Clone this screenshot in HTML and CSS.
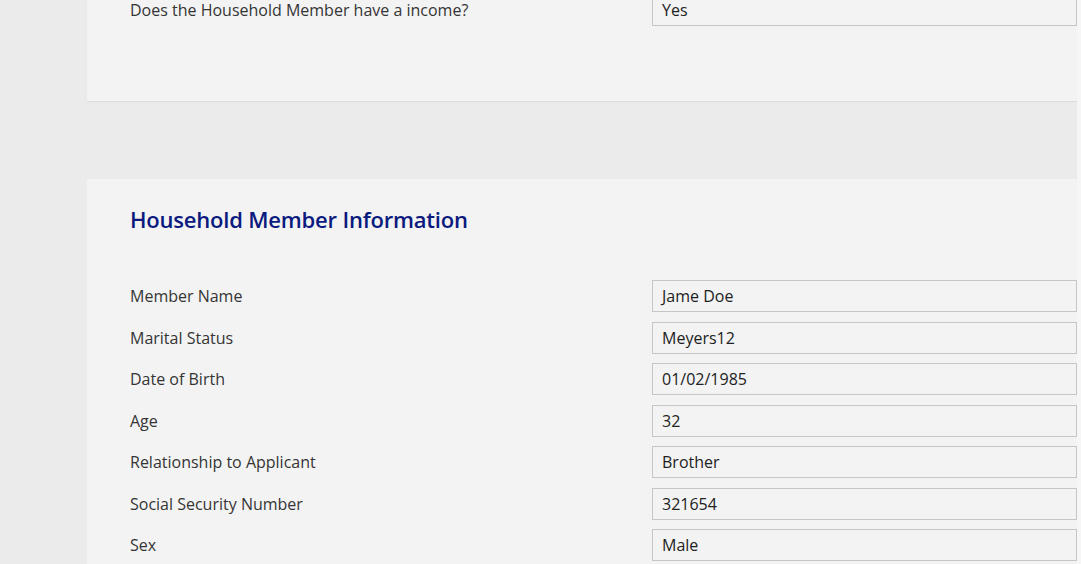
FILE: index.html
```html
<!DOCTYPE html>
<html lang="en">
<head>
<meta charset="utf-8">
<title>Household Member Information</title>
<link rel="stylesheet" href="styles.css">
</head>
<body>
<div class="page">
  <main class="content">
    <section class="panel panel-top">
      <div class="row">
        <div class="label">Does the Household Member have a income?</div>
        <div class="field">Yes</div>
      </div>
    </section>
    <section class="panel panel-member">
      <h2 class="title">Household Member Information</h2>
      <div class="rows">
        <div class="row"><div class="label">Member Name</div><div class="field">Jame Doe</div></div>
        <div class="row"><div class="label">Marital Status</div><div class="field">Meyers12</div></div>
        <div class="row"><div class="label">Date of Birth</div><div class="field">01/02/1985</div></div>
        <div class="row"><div class="label">Age</div><div class="field">32</div></div>
        <div class="row"><div class="label">Relationship to Applicant</div><div class="field">Brother</div></div>
        <div class="row"><div class="label">Social Security Number</div><div class="field">321654</div></div>
        <div class="row"><div class="label">Sex</div><div class="field">Male</div></div>
      </div>
    </section>
  </main>
  <div class="edge"></div>
</div>
</body>
</html>
```
FILE: styles.css
```css
html, body {
  margin: 0;
  padding: 0;
  height: 100%;
  overflow: hidden;
}
body {
  background: #ebebeb;
  font-family: "Open Sans", "Noto Sans", "Liberation Sans", sans-serif;
  color: #333333;
}
.page {
  display: flex;
  min-height: 100%;
}
.content {
  flex: 1;
  padding-left: 87px;
  margin-top: -6px;
  display: flex;
  flex-direction: column;
  gap: 78px;
}
.edge {
  width: 4px;
  background: #f6f6f6;
}
.panel {
  background: #f3f3f3;
  padding-left: 43px;
}
.panel-top {
  box-shadow: 0 1px 1px rgba(0,0,0,0.06);
  padding-bottom: 75px;
}
.panel-member {
  padding-top: 25px;
  padding-bottom: 40px;
}
.title {
  margin: 0 0 46px 0;
  font-size: 22px;
  font-weight: 600;
  color: #0a1a7e;
  letter-spacing: -0.2px;
  line-height: 30px;
}
.rows {
  display: flex;
  flex-direction: column;
  gap: 9.5px;
}
.row {
  display: flex;
  align-items: center;
}
.label {
  width: 522px;
  font-size: 16px;
  color: #353535;
}
.field {
  flex: 1;
  box-sizing: border-box;
  height: 32px;
  border: 1px solid #c6c6c6;
  padding: 0 9px;
  font-size: 16px;
  line-height: 30px;
  color: #222222;
}
```
